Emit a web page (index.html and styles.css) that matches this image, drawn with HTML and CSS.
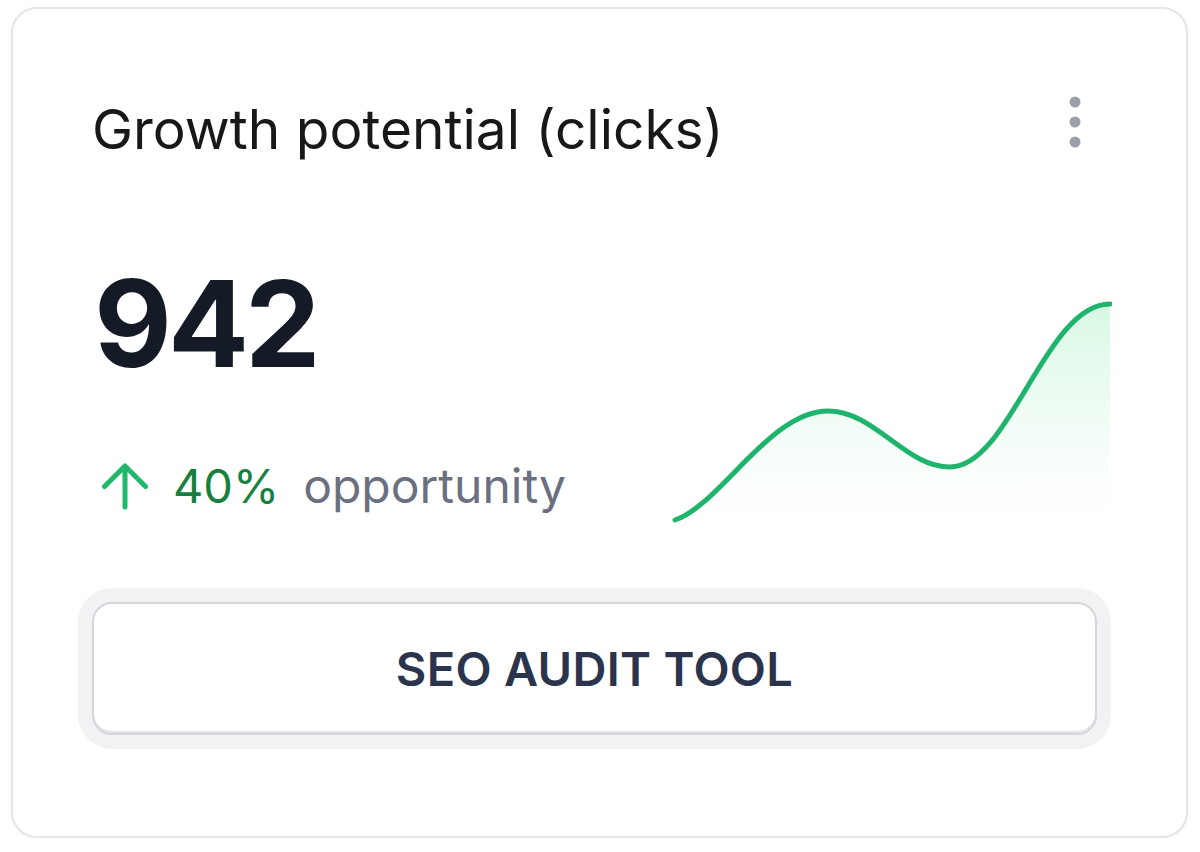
FILE: index.html
```html
<!DOCTYPE html>
<html lang="en">
<head>
<meta charset="UTF-8">
<meta name="viewport" content="width=device-width, initial-scale=1.0">
<title>Growth potential</title>
<link rel="stylesheet" href="styles.css">
</head>
<body>
    <div class="card">
        <!-- header: title + menu -->
        <div class="card-head">
            <h2 class="card-title">Growth potential (clicks)</h2>
            <svg class="menu-dots" width="12" height="52" viewBox="0 0 12 52">
                <circle cx="6" cy="6" r="5.5" fill="#9ca0a8"/>
                <circle cx="6" cy="26" r="5.5" fill="#9ca0a8"/>
                <circle cx="6" cy="46" r="5.5" fill="#9ca0a8"/>
            </svg>
        </div>

        <!-- value + sparkline -->
        <div class="card-body">
            <div class="stats">
                <div class="big-value">942</div>
                <div class="trend">
                    <svg class="trend-arrow" width="48" height="48" viewBox="0 0 48 48">
                        <path d="M24 45V4M3.5 24.5L24 4L44.5 24.5" fill="none" stroke="#1fb96c" stroke-width="5" stroke-linecap="round" stroke-linejoin="round"/>
                    </svg>
                    <span class="trend-pct">40%</span>
                    <span class="trend-label">opportunity</span>
                </div>
            </div>
            <svg class="spark" width="444" height="260" viewBox="668 264 444 260">
                <defs>
                    <linearGradient id="sparkFill" x1="0" y1="0" x2="0" y2="1">
                        <stop offset="0" stop-color="#c9f5d9" stop-opacity="0.75"/>
                        <stop offset="1" stop-color="#e6faee" stop-opacity="0"/>
                    </linearGradient>
                </defs>
                <path d="M675,520 C720,505 770,411 828,411 C875,411 905,467 950,467 C1010,467 1045,304 1110,304 L1110,524 L675,524 Z" fill="url(#sparkFill)"/>
                <path d="M675,520 C720,505 770,411 828,411 C875,411 905,467 950,467 C1010,467 1045,304 1110,304" fill="none" stroke="#1fb46c" stroke-width="5" stroke-linecap="round"/>
            </svg>
        </div>

        <button class="audit-btn">SEO AUDIT TOOL</button>
    </div>
</body>
</html>
```

FILE: styles.css
```css
html, body {
    margin: 0;
    background: #ffffff;
    font-family: Inter, "Noto Sans", sans-serif;
}
.card {
    box-sizing: border-box;
    width: 1177px;
    height: 831px;
    margin: 7px 0 0 11px;
    padding: 87px 74px 0 79px;
    background: #ffffff;
    border: 2px solid #e6e6e9;
    border-radius: 26px;
    box-shadow: 0 1px 4px rgba(0, 0, 0, 0.05);
}
.card-head {
    display: flex;
    justify-content: space-between;
    align-items: flex-start;
}
.card-title {
    margin: 0;
    font-size: 55px;
    line-height: 64px;
    font-weight: 400;
    color: #18181b;
    letter-spacing: 0;
    position: relative;
    top: 1px;
}
.menu-dots {
    margin: 0 31px 0 0;
}
.card-body {
    display: flex;
    justify-content: space-between;
    align-items: flex-end;
    margin-top: 104px;
}
.big-value {
    font-size: 120px;
    line-height: 120px;
    font-weight: 700;
    color: #141a26;
    letter-spacing: -4px;
    margin-left: 2px;
}
.trend {
    display: flex;
    align-items: center;
    gap: 24px;
    margin-top: 74px;
    height: 56px;
}
.trend-arrow {
    margin-left: 9px;
}
.trend-pct {
    font-size: 47px;
    line-height: 56px;
    font-weight: 400;
    color: #17803e;
}
.trend-label {
    font-size: 48px;
    line-height: 56px;
    color: #6b7080;
}
.spark {
    display: block;
    margin-bottom: -10px;
}
.audit-btn {
    display: block;
    box-sizing: border-box;
    width: 1005px;
    height: 133px;
    margin-top: 88px;
    background: #ffffff;
    border: 2px solid #d4d6db;
    border-radius: 20px;
    box-shadow: 0 0 0 14px #f1f2f4, inset 0 -2px 0 #e2e4e8;
    font-family: Inter, "Noto Sans", sans-serif;
    font-size: 47px;
    font-weight: 600;
    letter-spacing: 0.3px;
    color: #2a344d;
    cursor: pointer;
}
```
